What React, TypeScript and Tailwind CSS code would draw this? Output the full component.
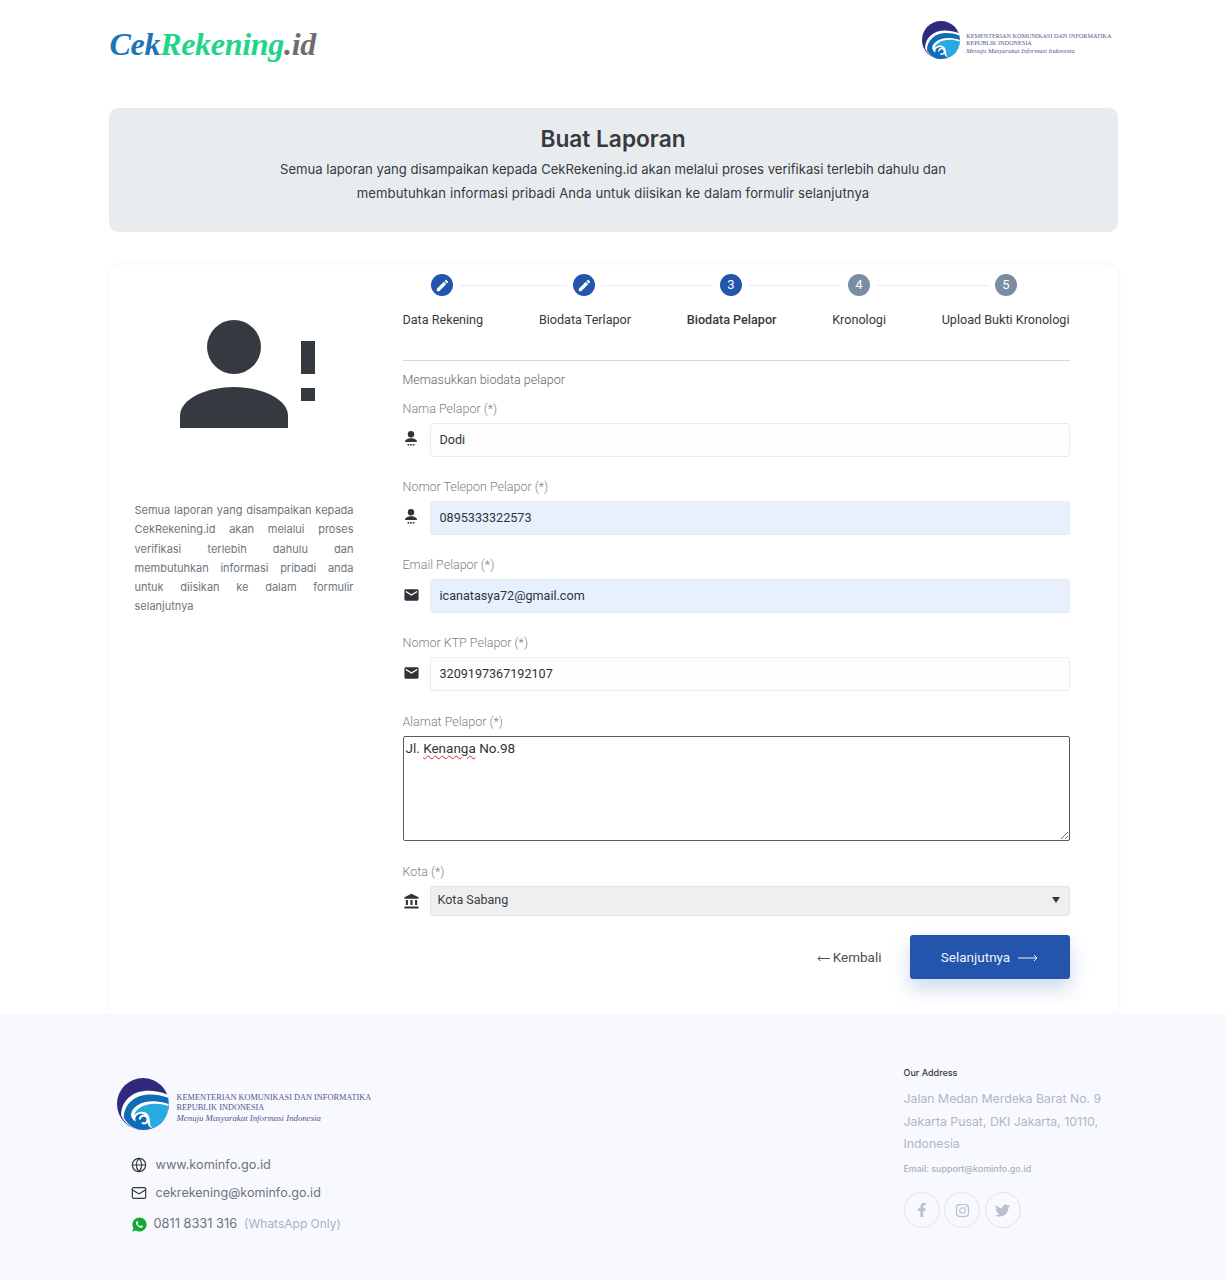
import { FaFacebookF, FaInstagram, FaTwitter } from "react-icons/fa";
import { MdAccountBalance, MdEdit, MdEmail } from "react-icons/md";
import { RiWhatsappFill } from "react-icons/ri";
import { Globe, Mail } from "lucide-react";

// Kominfo emblem, drawn by hand
function KominfoMark({ className }: { className: string }) {
  return (
    <svg viewBox="0 0 100 100" className={className}>
      <circle cx="50" cy="50" r="50" fill="#2f2a7e" />
      <path d="M8 72C8 36 44 12 98 32C100 40 100 56 97 66C90 90 68 100 50 100C30 100 15 88 8 72Z" fill="#ffffff" />
      <path d="M13 76C14 44 46 20 98 38C100 48 100 58 97 66C90 90 68 100 50 100C34 100 20 90 13 76Z" fill="#0f6db5" />
      <path d="M27 70C28 52 60 36 99 50C99 56 98 62 97 66C92 82 78 92 66 96C54 90 62 74 52 70C44 66 32 72 36 84C30 80 27 76 27 70Z" fill="#ffffff" />
      <path d="M33 72C36 56 64 42 99 54C98 62 97 66 95 72C88 88 76 94 68 96C60 92 68 72 54 66C44 62 36 68 33 72Z" fill="#29a9e1" />
      <path d="M44 80C44 72 54 70 58 76C62 84 54 90 48 86" fill="none" stroke="#ffffff" strokeWidth="4" />
    </svg>
  );
}

function KominfoLogo({ large }: { large?: boolean }) {
  return (
    <div className={large ? "flex items-center gap-[8px]" : "flex items-center gap-[6px]"}>
      <KominfoMark className={large ? "h-[52px] w-[52px] shrink-0" : "h-[38px] w-[38px] shrink-0"} />
      <div className={large ? "pt-[8px] font-['Liberation_Serif',serif] text-[#55558c]" : "pt-[6px] font-['Liberation_Serif',serif] text-[#55558c]"}>
        <div className={large ? "text-[8.3px] leading-[10px] whitespace-nowrap" : "text-[6.2px] leading-[7.6px] whitespace-nowrap"}>KEMENTERIAN KOMUNIKASI DAN INFORMATIKA</div>
        <div className={large ? "text-[8.3px] leading-[10px] whitespace-nowrap" : "text-[6.2px] leading-[7.6px] whitespace-nowrap"}>REPUBLIK INDONESIA</div>
        <div className={large ? "text-[8.8px] leading-[10px] italic whitespace-nowrap" : "text-[6.6px] leading-[7.6px] italic whitespace-nowrap"}>Menuju Masyarakat Informasi Indonesia</div>
      </div>
    </div>
  );
}

function PersonDots() {
  return (
    <svg viewBox="0 0 16 18" className="h-[18px] w-[16px]" fill="#2f343a">
      <circle cx="8" cy="4.2" r="3.2" />
      <path d="M2 12c0-2.6 3-3.8 6-3.8s6 1.2 6 3.8z" />
      <rect x="4.6" y="14" width="1.6" height="1.6" />
      <rect x="7.2" y="14" width="1.6" height="1.6" />
      <rect x="9.8" y="14" width="1.6" height="1.6" />
    </svg>
  );
}

const steps = [
  { label: "Data Rekening" },
  { label: "Biodata Terlapor" },
  { label: "Biodata Pelapor", current: true },
  { label: "Kronologi" },
  { label: "Upload Bukti Kronologi" },
];

function StepCircle({ mark, done }: { mark: string; done: boolean }) {
  return (
    <div className={done ? "flex h-[22px] w-[22px] shrink-0 items-center justify-center rounded-full bg-[#2255ab] text-[13px] text-white" : "flex h-[22px] w-[22px] shrink-0 items-center justify-center rounded-full bg-[#7b8da3] text-[13px] text-white"}>
      {mark === "edit" ? <MdEdit className="h-[15px] w-[15px]" /> : mark}
    </div>
  );
}

function Line({ className }: { className: string }) {
  return <div className={"h-px bg-[#e9ecef] " + className} />;
}

function Field({ label, value, icon, autofill, labelClass }: { label: string; value: string; icon: React.ReactNode; autofill?: boolean; labelClass: string }) {
  return (
    <div className={labelClass}>
      <label className="block text-[12.5px] leading-[15px] font-light text-[#7c8288]">{label}</label>
      <div className="mt-[7px] flex items-center gap-[10px]">
        <div className="flex w-[17px] shrink-0 justify-center pb-[3px]">{icon}</div>
        <input
          readOnly
          value={value}
          className={autofill
            ? "h-[34px] w-full rounded-[3px] border border-[#e6ebf5] bg-[#e8f0fe] px-[9px] pb-[2px] text-[12.6px] text-[#2f343a] outline-none"
            : "h-[34px] w-full rounded-[3px] border border-[#e9ecef] bg-[#fdfdfd] px-[9px] pb-[2px] text-[12.6px] text-[#2f343a] outline-none"}
        />
      </div>
    </div>
  );
}

export default function App() {
  return (
    <div className="w-[1226px] bg-white font-['Roboto',sans-serif]">
      {/* Header */}
      <div className="mx-auto flex h-[108px] w-[1009px] items-start justify-between pr-[6px]">
        <div className="mt-[21px] pl-[1px] text-[32px] leading-[46px] font-bold italic whitespace-nowrap font-['Liberation_Serif',serif] tracking-[-0.3px]">
          <span className="text-[#1c75b8]">Cek</span>
          <span className="text-[#22d48b]">Rekening</span>
          <span className="text-[#6e6e6e]">.id</span>
        </div>
        <div className="mt-[21px]">
          <KominfoLogo />
        </div>
      </div>

      {/* Banner */}
      <div className="mx-auto h-[124px] w-[1009px] rounded-[9px] bg-[#e9ecef] pt-[16px] text-center font-['Inter',sans-serif] text-[#343a40]">
        <h1 className="text-[22.7px] leading-[30px] font-semibold">Buat Laporan</h1>
        <p className="mt-[3px] text-[13.1px] leading-[24px]">
          Semua laporan yang disampaikan kepada CekRekening.id akan melalui proses verifikasi terlebih dahulu dan
          <br />
          <span className="tracking-[0.09px]">membutuhkan informasi pribadi Anda untuk diisikan ke dalam formulir selanjutnya</span>
        </p>
      </div>

      {/* Card */}
      <div className="mx-auto mt-[33px] flex h-[749px] w-[1009px] rounded-[9px] bg-white shadow-[0_0_6px_rgba(0,0,0,0.05)]">
        <div className="w-[294px] shrink-0 pl-[26px]">
          <div className="mt-[55px] pl-[45px]">
            <svg viewBox="0 0 136 108" className="h-[108px] w-[136px]" fill="#343a40">
              <circle cx="54" cy="27" r="27" />
              <path d="M0 108V96C0 78 28 67 54 67s54 11 54 29v12z" />
              <rect x="121" y="21" width="14" height="33" />
              <rect x="121" y="68" width="14" height="13" />
            </svg>
          </div>
          <p className="mt-[73px] w-[219px] text-justify font-['Inter',sans-serif] text-[11px] leading-[19.3px] text-[#6c757d]">
            Semua laporan yang disampaikan kepada CekRekening.id akan melalui proses verifikasi terlebih dahulu dan membutuhkan informasi pribadi anda untuk diisikan ke dalam formulir selanjutnya
          </p>
        </div>

        <div className="w-[667px] pt-[9px]">
          {/* Stepper */}
          <div className="flex items-center pl-[28.5px]">
            <StepCircle mark="edit" done />
            <Line className="mr-[6px] ml-[7px] w-[107px]" />
            <StepCircle mark="edit" done />
            <Line className="mr-[6px] ml-[7px] w-[112px]" />
            <StepCircle mark="3" done />
            <Line className="mr-[7px] ml-[7px] w-[92px]" />
            <StepCircle mark="4" done={false} />
            <Line className="mr-[6px] ml-[7px] w-[112px]" />
            <StepCircle mark="5" done={false} />
          </div>
          <div className="mt-[16px] flex justify-between text-[12.6px] leading-[15px] text-[#343a40]">
            {steps.map((s) => (
              <span key={s.label} className={s.current ? "font-medium" : ""}>{s.label}</span>
            ))}
          </div>
          <div className="mt-[33px] h-px bg-[#d5d7da]" />
          <p className="mt-[11px] text-[12.5px] leading-[15px] font-light text-[#5f656b]">Memasukkan biodata pelapor</p>

          <Field labelClass="mt-[14px]" label="Nama Pelapor (*)" value="Dodi" icon={<PersonDots />} />
          <Field labelClass="mt-[22px]" label="Nomor Telepon Pelapor (*)" value="0895333322573" icon={<PersonDots />} autofill />
          <Field labelClass="mt-[22px]" label="Email Pelapor (*)" value="icanatasya72@gmail.com" icon={<MdEmail className="h-[20px] w-[20px] text-[#2f343a]" />} autofill />
          <Field labelClass="mt-[22px]" label="Nomor KTP Pelapor (*)" value="3209197367192107" icon={<MdEmail className="h-[20px] w-[20px] text-[#2f343a]" />} />

          <div className="mt-[23px]">
            <label className="block text-[12.5px] leading-[15px] font-light text-[#7c8288]">Alamat Pelapor (*)</label>
            <div className="relative mt-[7px] h-[105px] w-full rounded-[2px] border border-[#555a5f] px-[2px] pt-[3px] text-[13.5px] leading-[16px] text-[#2f343a]">
              Jl. <span className="underline decoration-[#d4272a] decoration-wavy decoration-1 underline-offset-2">Kenanga</span> No.98
              <svg viewBox="0 0 8 8" className="absolute right-[1px] bottom-[1px] h-[8px] w-[8px]" stroke="#6b6b6b" strokeWidth="1">
                <path d="M8 1L1 8M8 5L5 8" />
              </svg>
            </div>
          </div>

          <div className="mt-[23px]">
            <label className="block text-[12.5px] leading-[15px] font-light text-[#7c8288]">Kota (*)</label>
            <div className="mt-[7px] flex items-center gap-[10px]">
              <div className="flex w-[17px] shrink-0 justify-center">
                <MdAccountBalance className="h-[19px] w-[19px] text-[#2f343a]" />
              </div>
              <div className="relative w-full">
                <select defaultValue="Kota Sabang" className="h-[30px] w-full appearance-none rounded-[3px] border border-[#e2e3e5] bg-[#efefef] pb-[1px] pl-[7px] text-[12.5px] text-[#3a3f44] outline-none">
                  <option>Kota Sabang</option>
                </select>
                <svg viewBox="0 0 8 6" className="pointer-events-none absolute top-[11px] right-[10px] h-[6px] w-[8px]" fill="#343a40">
                  <path d="M0 0h8L4 6z" />
                </svg>
              </div>
            </div>
          </div>

          <div className="mt-[19px] flex items-center justify-end">
            <span className="mr-[28px] flex items-center gap-[3px] text-[13.5px] text-[#495057]">
              <svg viewBox="0 0 13 7" className="mt-[3px] h-[7px] w-[13px]" fill="none" stroke="#495057" strokeWidth="1">
                <path d="M13 3.5H1M3.5 1L1 3.5 3.5 6" />
              </svg>
              Kembali
            </span>
            <button className="flex h-[44px] w-[160px] items-center justify-center gap-[8px] rounded-[3px] bg-[#2255ab] text-[13.5px] text-[#eef3fb] shadow-[0_10px_20px_rgba(34,85,171,0.22)]">
              Selanjutnya
              <svg viewBox="0 0 20 8" className="mt-[2px] h-[8px] w-[20px]" fill="none" stroke="#eef3fb" strokeWidth="1">
                <path d="M0 4h19M16 1l3 3-3 3" />
              </svg>
            </button>
          </div>
        </div>
      </div>

      {/* Footer */}
      <div className="h-[266px] bg-[#f8f9ff] font-['Inter',sans-serif]">
        <div className="mx-auto flex w-[1009px] justify-between pr-[13px]">
          <div className="pt-[64px] pl-[8px]">
            <KominfoLogo large />
            <div className="mt-[26px] flex items-center gap-[9px] pl-[14px] text-[12.7px] leading-[18px] text-[#6c757d]">
              <Globe className="h-[16px] w-[16px] text-[#343a40]" strokeWidth={1.8} />
              www.kominfo.go.id
            </div>
            <div className="mt-[10px] flex items-center gap-[9px] pl-[14px] text-[12.55px] leading-[18px] text-[#6c757d]">
              <Mail className="h-[16px] w-[16px] text-[#343a40]" strokeWidth={1.8} />
              cekrekening@kominfo.go.id
            </div>
            <div className="mt-[13px] flex items-center gap-[6px] pl-[14px] text-[12.8px] leading-[18px] text-[#6c757d]">
              <RiWhatsappFill className="h-[17px] w-[17px] text-[#17a92f]" />
              0811 8331 316
              <span className="ml-[1px] text-[12px] text-[#a9b0c4]">(WhatsApp Only)</span>
            </div>
          </div>
          <div className="w-[201px] pt-[53px]">
            <h6 className="text-[9px] leading-[12px] font-medium text-[#343a40]">Our Address</h6>
            <p className="mt-[9px] text-[12.3px] leading-[22.7px] whitespace-nowrap text-[#b0b6c6]">
              Jalan Medan Merdeka Barat No. 9
              <br />
              Jakarta Pusat, DKI Jakarta, 10110,
              <br />
              Indonesia
            </p>
            <p className="mt-[7px] text-[8.9px] leading-[12px] font-medium text-[#a9afc0]">Email: support@kominfo.go.id</p>
            <div className="mt-[17px] flex gap-[4.5px]">
              <div className="flex h-[36px] w-[36px] items-center justify-center rounded-full border border-[#dfe2ea] text-[#b9bfcf]"><FaFacebookF className="h-[14px] w-[14px]" /></div>
              <div className="flex h-[36px] w-[36px] items-center justify-center rounded-full border border-[#dfe2ea] text-[#b9bfcf]"><FaInstagram className="h-[15px] w-[15px]" /></div>
              <div className="flex h-[36px] w-[36px] items-center justify-center rounded-full border border-[#dfe2ea] text-[#b9bfcf]"><FaTwitter className="h-[15px] w-[15px]" /></div>
            </div>
          </div>
        </div>
      </div>
    </div>
  );
}
